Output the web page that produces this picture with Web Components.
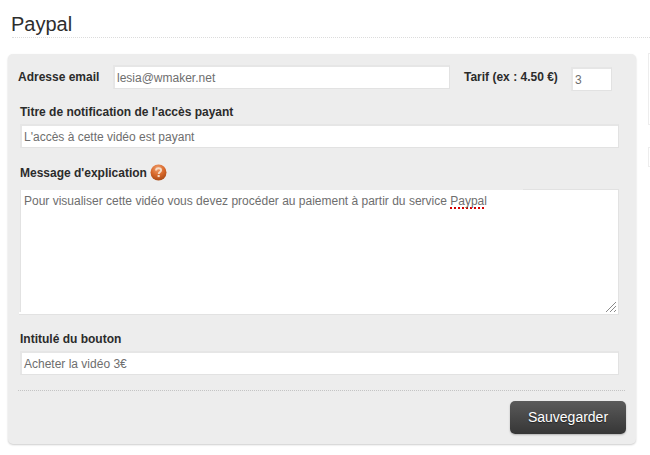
<!DOCTYPE html>
<html lang="fr"><head><meta charset="utf-8">
<style>html,body{margin:0;padding:0;background:#fff}body{width:650px;height:455px;overflow:hidden;font-family:"Liberation Sans",Arial,sans-serif}</style>
</head><body>
<pay-page></pay-page>
<script>
function def(name, html){
  customElements.define(name, class extends HTMLElement{
    constructor(){super();this.attachShadow({mode:'open'}).innerHTML=html;}
  });
}
def('pay-field',`<style>
:host{display:block;box-sizing:border-box;background:#fff;border:1px solid #e2e2e2;border-top:2px solid #e6e6e6;border-left:2px solid #e6e6e6;height:24px;padding:0 0 0 2px;font-size:12px;line-height:22px;color:#6e6e6e;white-space:nowrap;overflow:hidden}
</style><slot></slot>`);
def('pay-label',`<style>
:host{display:block;font-size:12px;font-weight:700;color:#2b2b2b;line-height:16px;white-space:nowrap}
</style><slot></slot>`);
def('pay-help',`<style>:host{display:inline-block;width:17px;height:17px;vertical-align:middle}svg{display:block}</style>
<svg width="17" height="17" viewBox="0 0 17 17"><defs><radialGradient id="g" cx=".45" cy=".25" r=".85"><stop offset="0" stop-color="#f0a070"/><stop offset=".5" stop-color="#d8682a"/><stop offset="1" stop-color="#9c4212"/></radialGradient></defs>
<circle cx="8.5" cy="8.5" r="8" fill="url(#g)"/>
<path d="M6 6.6C6 5 7.2 4.2 8.6 4.2 10 4.2 11.1 5 11.1 6.3 11.1 8 8.7 8 8.7 10" fill="none" stroke="#f6dcc6" stroke-width="1.9"/><rect x="7.6" y="11" width="2.1" height="2.1" fill="#f6dcc6"/></svg>`);
def('pay-textarea',`<style>
:host{display:block;position:relative;box-sizing:border-box;background:#fff;border:1px solid #e2e2e2;height:126px;padding:3px 0 0 3px;font-size:12px;line-height:17px;color:#6e6e6e;white-space:nowrap}
.grip{position:absolute;right:1px;bottom:1px;display:block}
.notch{position:absolute;top:-1px;left:-1px;width:503px;height:1px;background:#ededed}
.foot{position:absolute;left:-2px;bottom:-1px;width:2px;height:3px;background:#fff;border-bottom:1px solid #e2e2e2;box-sizing:border-box}
</style><span class="notch"></span><span class="foot"></span><slot></slot>
<svg class="grip" width="12" height="12" viewBox="0 0 12 12"><path d="M1 11 11 1M5 11 11 5M9 11 11 9" stroke="#8a8a8a" stroke-width="1" fill="none"/></svg>`);
def('pay-button',`<style>
:host{display:block;box-sizing:border-box;width:116px;height:33px;border-radius:5px;background:linear-gradient(#5a5a5a,#363636);box-shadow:0 1px 2px rgba(0,0,0,.25);color:#fff;font-size:14px;line-height:32px;text-align:center;text-shadow:0 1px 1px rgba(0,0,0,.5)}
</style><slot></slot>`);
def('pay-panel',`<style>
:host{display:block;box-sizing:border-box;width:628px;height:390px;margin-left:8px;background:#ededed;border-radius:5px;box-shadow:0 1px 2px rgba(0,0,0,.2);padding:11px 10px 0 10px}
</style><slot></slot>`);
def('pay-page',`<style>
:host{display:block;position:relative;width:650px;height:455px;color:#2b2b2b}
h1{margin:0 0 0 11px;padding-top:13px;font-weight:400;font-size:20px;line-height:23px;color:#2e2e2e}
.rule{margin:1px 0 16px 12px;border-top:1px dotted #dcdcdc;height:0}
.top{display:flex;align-items:flex-start}
.top .a{width:95px;padding-top:4px}
.top .mail{width:337px}
.top .b{margin-left:14px;width:107px;padding-top:4px}
.top .tarif{margin-top:2px;width:41px}
.col{margin-left:2px;width:599px}
.l1{margin-top:13px}
.f1{margin-top:4px}
.l2{margin-top:16px;display:flex;align-items:center;gap:3px;height:17px}
.ta{margin-top:8px}
.l3{margin-top:16px}
.f3{margin-top:4px}
.sep{margin-top:15px;border-top:1px dotted #c4c4c4;width:607px}
.act{display:flex;justify-content:flex-end;margin-top:10px;width:608px}
u{text-decoration:underline dotted #d40000 2px;text-underline-offset:2px}
.side{position:absolute;left:648px;width:2px;box-sizing:border-box;border:1px solid #ededed;border-right:0}
</style>
<h1>Paypal</h1><div class="rule"></div>
<pay-panel>
  <div class="top">
    <pay-label class="a">Adresse email</pay-label>
    <pay-field class="mail">lesia@wmaker.net</pay-field>
    <pay-label class="b">Tarif (ex : 4.50 €)</pay-label>
    <pay-field class="tarif">3</pay-field>
  </div>
  <div class="col">
    <pay-label class="l1">Titre de notification de l'accès payant</pay-label>
    <pay-field class="f1">L'accès à cette vidéo est payant</pay-field>
    <pay-label class="l2"><span>Message d'explication</span><pay-help></pay-help></pay-label>
    <pay-textarea class="ta">Pour visualiser cette vidéo vous devez procéder au paiement à partir du service <u>Paypal</u></pay-textarea>
    <pay-label class="l3">Intitulé du bouton</pay-label>
    <pay-field class="f3">Acheter la vidéo 3€</pay-field>
  </div>
  <div class="sep"></div>
  <div class="act"><pay-button>Sauvegarder</pay-button></div>
</pay-panel>
<div class="side" style="top:53px;height:72px"></div>
<div class="side" style="top:147px;height:20px"></div>`);
</script>
</body></html>
